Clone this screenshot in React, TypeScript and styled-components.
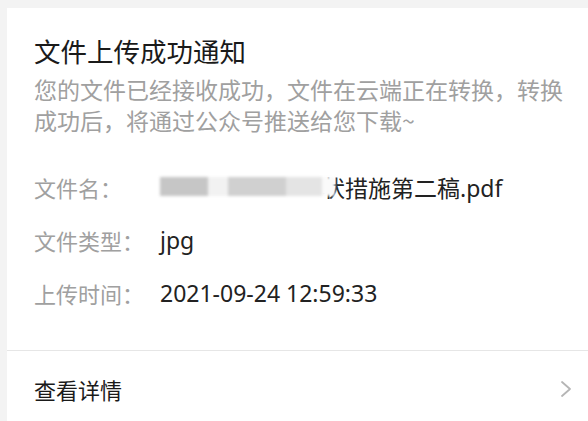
import styled, { createGlobalStyle } from 'styled-components'

const GlobalStyle = createGlobalStyle`
  html, body {
    margin: 0;
    padding: 0;
    background: #f3f3f3;
    overflow: hidden;
  }
  body {
    font-family: "Noto Sans CJK SC", "Noto Sans", sans-serif;
  }
`

const Page = styled.div`
  padding: 8px 0 0 7px;
  height: 413px;
`

const Card = styled.div`
  background: #fff;
  height: 100%;
  display: flex;
  flex-direction: column;
`

const Body = styled.div`
  padding: 26px 16px 31px 27px;
`

const Title = styled.h1`
  margin: 0;
  font-size: 26.5px;
  line-height: 34px;
  font-weight: 400;
  color: #1a1a1a;
`

const Desc = styled.p`
  margin: 6px 0 0;
  font-size: 23px;
  line-height: 31px;
  color: #a0a0a0;
`

const Fields = styled.div`
  margin-top: 24px;
  display: flex;
  flex-direction: column;
`

const Field = styled.div`
  display: flex;
  align-items: center;
  height: 53px;
`

const Label = styled.span`
  width: 126px;
  flex-shrink: 0;
  font-size: 22px;
  color: #a0a0a0;
`

const Value = styled.span`
  font-family: "Noto Sans", "Noto Sans CJK SC", sans-serif;
  font-size: 23px;
  color: #222;
  display: inline-flex;
  align-items: center;
`

// blurred part of the file name, laid over the first character
const Mosaic = styled.span`
  position: relative;
  z-index: 1;
  display: inline-flex;
  align-items: center;
  height: 22px;
  margin-right: -13px;
  filter: blur(1.6px);
`

const Tile = styled.span<{ $w: number; $c: string }>`
  display: inline-block;
  width: ${({ $w }) => $w}px;
  height: 19px;
  background: ${({ $c }) => $c};
`

const Divider = styled.hr`
  margin: 0;
  border: none;
  border-top: 1px solid #e6e6e6;
`

const Footer = styled.div`
  display: flex;
  align-items: center;
  justify-content: space-between;
  height: 78px;
  padding: 6px 16px 0 27px;
`

const FooterText = styled.span`
  font-size: 22px;
  color: #1a1a1a;
`

const Chevron = () => (
  <svg width="12" height="18" viewBox="0 0 12 18" fill="none">
    <polyline points="2,2 10,9 2,16" stroke="#b5b5b5" strokeWidth="1.8" strokeLinecap="round" strokeLinejoin="round" />
  </svg>
)

export default function App() {
  return (
    <>
      <GlobalStyle />
      <Page>
        <Card>
          <Body>
            <Title>文件上传成功通知</Title>
            <Desc>您的文件已经接收成功，文件在云端正在转换，转换成功后，将通过公众号推送给您下载~</Desc>
            <Fields>
              <Field>
                <Label>文件名：</Label>
                <Value>
                  <Mosaic>
                    <Tile $w={48} $c="#c6c6c6" />
                    <Tile $w={20} $c="#f2f2f2" />
                    <Tile $w={58} $c="#d0d0d0" />
                    <Tile $w={36} $c="#e4e4e4" />
                    <Tile $w={13} $c="#fafafa" />
                  </Mosaic>
                  状措施第二稿.pdf
                </Value>
              </Field>
              <Field>
                <Label>文件类型：</Label>
                <Value>jpg</Value>
              </Field>
              <Field>
                <Label>上传时间：</Label>
                <Value>2021-09-24 12:59:33</Value>
              </Field>
            </Fields>
          </Body>
          <Divider />
          <Footer>
            <FooterText>查看详情</FooterText>
            <Chevron />
          </Footer>
        </Card>
      </Page>
    </>
  )
}
